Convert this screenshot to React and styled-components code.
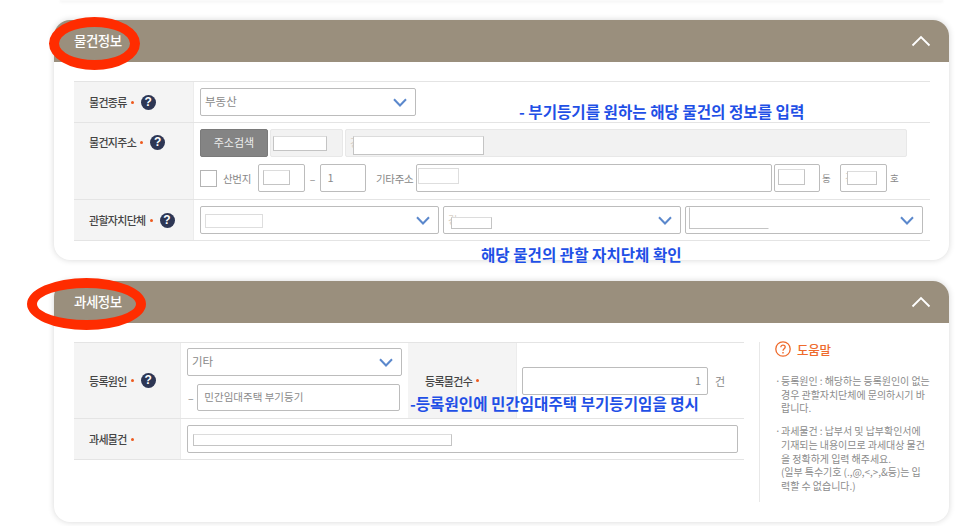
import styled, { createGlobalStyle } from "styled-components";

const GlobalStyle = createGlobalStyle`
  html, body {
    margin: 0;
    padding: 0;
    background: #fff;
  }
  body {
    font-family: "Noto Sans CJK KR", "Noto Sans", sans-serif;
    color: #555;
  }
`;

const Page = styled.div`
  width: 966px;
  height: 526px;
  overflow: hidden;
  box-sizing: border-box;
  padding: 0 17px 0 54px;
`;

const TopEdge = styled.div`
  height: 1px;
  margin: 0 6px 19px;
  background: #fafafa;
  box-shadow: 0 1px 3px rgba(0, 0, 0, 0.1);
`;

const Card = styled.section`
  position: relative;
  height: ${(p) => p.$height}px;
  margin-bottom: 21px;
  background: #fff;
  border-radius: 16px;
  box-shadow: 0 0 6px rgba(0, 0, 0, 0.16);
`;

const CardHeader = styled.header`
  height: 42px;
  box-sizing: border-box;
  padding: 0 18px 0 20px;
  display: flex;
  align-items: center;
  justify-content: space-between;
  background: #9a8f7d;
  border-radius: 16px 16px 0 0;
`;

const CardTitle = styled.h2`
  position: relative;
  z-index: 2;
  margin: 0 0 2px;
  font-size: 13.5px;
  font-weight: 500;
  letter-spacing: -0.5px;
  color: #fff;
`;

const CardBody = styled.div`
  display: flex;
  padding: 19px 19px 0 20px;
`;

const Table = styled.div`
  width: ${(p) => p.$width}px;
  border-top: 1px solid #e4e4e4;
`;

const Row = styled.div`
  display: flex;
  height: ${(p) => p.$height}px;
  border-bottom: 1px solid #e4e4e4;
`;

const Label = styled.div`
  flex: none;
  width: ${(p) => p.$width}px;
  box-sizing: border-box;
  padding: ${(p) => (p.$top ? "11px" : "0")} 0 0 ${(p) => p.$indent || 15}px;
  display: flex;
  align-items: ${(p) => (p.$top ? "flex-start" : "center")};
  background: #f4f4f4;
  border-right: 1px solid #ececec;
  font-size: 11px;
  font-weight: 500;
  letter-spacing: -0.7px;
  color: #444;
  line-height: 16px;
`;

const LabelText = styled.span`
  display: flex;
  align-items: center;
`;

const Dot = styled.span`
  width: 3px;
  height: 3px;
  flex: none;
  margin-left: 4px;
  border-radius: 50%;
  background: #ee5a1e;
`;

const Help = styled.span`
  flex: none;
  width: 15px;
  height: 15px;
  margin-left: 7px;
  display: flex;
  align-items: center;
  justify-content: center;
  border-radius: 50%;
  background: #2d3654;
  color: #fff;
  letter-spacing: 0;
  font: 700 12px/15px "Liberation Sans", sans-serif;
`;

const Cell = styled.div`
  flex: ${(p) => (p.$width ? "none" : 1)};
  width: ${(p) => (p.$width ? `${p.$width}px` : "auto")};
  box-sizing: border-box;
  min-width: 0;
  padding: ${(p) => p.$pad || "6px"};
  display: flex;
  flex-direction: ${(p) => (p.$column ? "column" : "row")};
  gap: ${(p) => p.$gap || 0}px;
  align-items: ${(p) => (p.$column ? "stretch" : "center")};
`;

const Line = styled.div`
  display: flex;
  align-items: center;
  gap: ${(p) => p.$gap || 0}px;
`;

const Field = styled.div`
  position: relative;
  flex: none;
  width: ${(p) => p.$width}px;
  height: ${(p) => p.$height || 28}px;
  box-sizing: border-box;
  margin-left: ${(p) => p.$ml || 0}px;
  padding: 0 ${(p) => (p.$right ? "6px" : "4px")} 2px;
  display: flex;
  align-items: center;
  justify-content: ${(p) => (p.$right ? "flex-end" : "space-between")};
  border: 1px solid ${(p) => (p.$disabled ? "#e8e8e8" : "#bcbcbc")};
  border-radius: 2px;
  background: ${(p) => (p.$disabled ? "#f2f2f2" : "#fff")};
  font-size: ${(p) => p.$size || 11}px;
  color: #8a8a8a;
`;

// redaction box painted over the field value
const Mask = styled.span`
  position: absolute;
  left: ${(p) => p.$x}px;
  top: ${(p) => p.$y}px;
  width: ${(p) => p.$w}px;
  height: ${(p) => p.$h}px;
  box-sizing: border-box;
  background: #fff;
  border: 1px solid ${(p) => (p.$light ? "#dedede" : "#c4c4c4")};
  border-top-color: ${(p) => (p.$soft ? "#fff" : "#dcdcdc")};
  border-right-color: ${(p) => (p.$soft ? "#fff" : p.$light ? "#dedede" : "#c4c4c4")};
`;

// what is left of the covered value
const Residue = styled.span`
  font-size: 10px;
  color: #d8d0c6;
`;

const SearchButton = styled.button`
  flex: none;
  width: 68px;
  height: 28px;
  padding: 0 0 2px;
  border: 1px solid #7a7a7a;
  border-radius: 2px;
  background: #848484;
  color: #eee;
  font: 400 11px "Noto Sans CJK KR", sans-serif;
`;

const Checkbox = styled.span`
  flex: none;
  width: 17px;
  height: 17px;
  box-sizing: border-box;
  border: 1px solid #b4b4b4;
  background: #fff;
`;

const Caption = styled.span`
  flex: none;
  width: ${(p) => p.$width}px;
  padding-left: ${(p) => p.$indent || 0}px;
  box-sizing: border-box;
  font-size: ${(p) => p.$size || 10.5}px;
  letter-spacing: -0.3px;
  color: #888;
  text-align: ${(p) => (p.$center ? "center" : "left")};
  white-space: nowrap;
`;

const Arrow = styled.svg`
  flex: none;
  margin: ${(p) => p.$m || "2px 4px 0 0"};
  fill: none;
  stroke: ${(p) => p.$color || "#5b88cc"};
  stroke-width: ${(p) => p.$sw || 2};
`;

const Annotation = styled.div`
  position: absolute;
  left: ${(p) => p.$x}px;
  top: ${(p) => p.$y}px;
  z-index: 3;
  font-size: 15.6px;
  font-weight: 700;
  line-height: 20px;
  color: #1f50e6;
  white-space: nowrap;
`;

const Circle = styled.div`
  position: absolute;
  left: ${(p) => p.$x}px;
  top: ${(p) => p.$y}px;
  z-index: 1;
  width: ${(p) => p.$w}px;
  height: ${(p) => p.$h}px;
  box-sizing: border-box;
  border: 10px solid #ff2c00;
  border-radius: 50%;
`;

const Aside = styled.aside`
  flex: none;
  width: 170px;
  height: 160px;
  margin-left: 15px;
  box-sizing: border-box;
  padding-left: 15px;
  border-left: 1px solid #e8e8e8;
`;

const AsideTitle = styled.div`
  display: flex;
  align-items: center;
  gap: 6px;
  height: 14px;
  margin-bottom: 18px;
  font-size: 12.5px;
  font-weight: 500;
  letter-spacing: -0.3px;
  color: #ee6a2c;
`;

const HelpText = styled.p`
  position: relative;
  margin: 0 0 9px;
  padding-left: 6px;
  font-size: 10px;
  line-height: 13.7px;
  letter-spacing: -0.05px;
  color: #8c8c8c;
  white-space: nowrap;
  &::before {
    content: "·";
    position: absolute;
    left: 0;
  }
`;

const Chevron = () => (
  <Arrow width="14" height="9" viewBox="0 0 14 9">
    <path d="M1 1.2 7 7.5 13 1.2" />
  </Arrow>
);

const Collapse = () => (
  <Arrow $color="#fff" $sw={1.8} $m="0" width="20" height="12" viewBox="0 0 20 12">
    <path d="M1.5 10.5 10 2 18.5 10.5" />
  </Arrow>
);

const Required = ({ children, help, ...rest }) => (
  <Label {...rest}>
    <LabelText>
      {children}
      <Dot />
      {help && <Help>?</Help>}
    </LabelText>
  </Label>
);

export default function App() {
  return (
    <Page>
      <GlobalStyle />
      <TopEdge />

      <Card $height={240}>
        <Circle $x={-5} $y={-3} $w={91} $h={53} />
        <CardHeader>
          <CardTitle>물건정보</CardTitle>
          <Collapse />
        </CardHeader>
        <CardBody>
          <Table $width={856}>
            <Row $height={40}>
              <Required $width={120} help>물건종류</Required>
              <Cell>
                <Field $width={216} $size={11.5}>
                  부동산
                  <Chevron />
                </Field>
              </Cell>
            </Row>
            <Row $height={76}>
              <Required $width={120} $top help>물건지주소</Required>
              <Cell $column $gap={7}>
                <Line>
                  <SearchButton>주소검색</SearchButton>
                  <Field $disabled $width={73} $ml={2}>
                    <Mask $x={2} $y={6} $w={54} $h={15} />
                  </Field>
                  <Field $disabled $width={562} $ml={2}>
                    <Residue>경</Residue>
                    <Mask $x={7} $y={6} $w={131} $h={19} />
                  </Field>
                </Line>
                <Line>
                  <Checkbox />
                  <Caption $width={41} $indent={6}>산번지</Caption>
                  <Field $width={47}>
                    <Mask $x={4} $y={5} $w={27} $h={15} />
                  </Field>
                  <Caption $width={15} $center>–</Caption>
                  <Field $width={46}>&nbsp;1</Field>
                  <Caption $width={50} $indent={10}>기타주소</Caption>
                  <Field $width={356}>
                    <Mask $x={1} $y={3} $w={41} $h={16} $light />
                  </Field>
                  <Field $width={46} $ml={2}>
                    <Mask $x={3} $y={4} $w={27} $h={16} />
                  </Field>
                  <Caption $width={20} $indent={2} $size={9.5}>동</Caption>
                  <Field $width={47}>
                    <Residue>경</Residue>
                    <Mask $x={6} $y={6} $w={30} $h={14} />
                  </Field>
                  <Caption $width={12} $indent={3} $size={9.5}>호</Caption>
                </Line>
              </Cell>
            </Row>
            <Row $height={40}>
              <Required $width={120} help>관할자치단체</Required>
              <Cell>
                <Line $gap={4}>
                  <Field $width={239}>
                    <Mask $x={4} $y={7} $w={58} $h={14} $light />
                    <span />
                    <Chevron />
                  </Field>
                  <Field $width={238}>
                    <Residue>경</Residue>
                    <Mask $x={7} $y={10} $w={41} $h={12} />
                    <Chevron />
                  </Field>
                  <Field $width={238}>
                    <Mask $x={3} $y={0} $w={80} $h={22} $soft />
                    <span />
                    <Chevron />
                  </Field>
                </Line>
              </Cell>
            </Row>
          </Table>
        </CardBody>
        <Annotation $x={465} $y={81}>- 부기등기를 원하는 해당 물건의 정보를 입력</Annotation>
        <Annotation $x={427} $y={224}>해당 물건의 관할 자치단체 확인</Annotation>
      </Card>

      <Card $height={241}>
        <Circle $x={-27} $y={-3} $w={119} $h={52} />
        <CardHeader>
          <CardTitle>과세정보</CardTitle>
          <Collapse />
        </CardHeader>
        <CardBody>
          <Table $width={670}>
            <Row $height={75}>
              <Required $width={107} help>등록원인</Required>
              <Cell $width={227} $column $gap={8} $pad="5px 6px 0">
                <Field $width={215} $size={11.5}>
                  기타
                  <Chevron />
                </Field>
                <Line>
                  <Caption $width={10} $indent={1}>–</Caption>
                  <Field $width={203} $height={27} $size={10.5}>&nbsp;민간임대주택 부기등기</Field>
                </Line>
              </Cell>
              <Required $width={109} $indent={17}>등록물건수</Required>
              <Cell $pad="0 0 0 5px">
                <Field $width={186} $right>1</Field>
                <Caption $width={20} $indent={7} $size={11}>건</Caption>
              </Cell>
            </Row>
            <Row $height={40}>
              <Required $width={107}>과세물건</Required>
              <Cell>
                <Field $width={551}>
                  <Mask $x={5} $y={8} $w={259} $h={12} />
                </Field>
              </Cell>
            </Row>
          </Table>
          <Aside>
            <AsideTitle>
              <svg width="16" height="16" viewBox="0 0 16 16" fill="none" stroke="#ee6a2c">
                <circle cx="8" cy="8" r="7.2" strokeWidth="1.3" />
                <path d="M5.8 6.2C5.8 4.9 6.8 4.1 8 4.1s2.2.8 2.2 2c0 1.7-2.2 1.8-2.2 3.6" strokeWidth="1.3" />
                <path d="M8 11v1.4" strokeWidth="1.4" />
              </svg>
              도움말
            </AsideTitle>
            <HelpText>
              등록원인 : 해당하는 등록원인이 없는<br />
              경우 관할자치단체에 문의하시기 바<br />
              랍니다.
            </HelpText>
            <HelpText>
              과세물건 : 납부서 및 납부확인서에<br />
              기재되는 내용이므로 과세대상 물건<br />
              을 정확하게 입력 해주세요.<br />
              (일부 특수기호 (.,@,&lt;,&gt;,&amp;등)는 입<br />
              력할 수 없습니다.)
            </HelpText>
          </Aside>
        </CardBody>
        <Annotation $x={356} $y={112}>-등록원인에 민간임대주택 부기등기임을 명시</Annotation>
      </Card>
    </Page>
  );
}
